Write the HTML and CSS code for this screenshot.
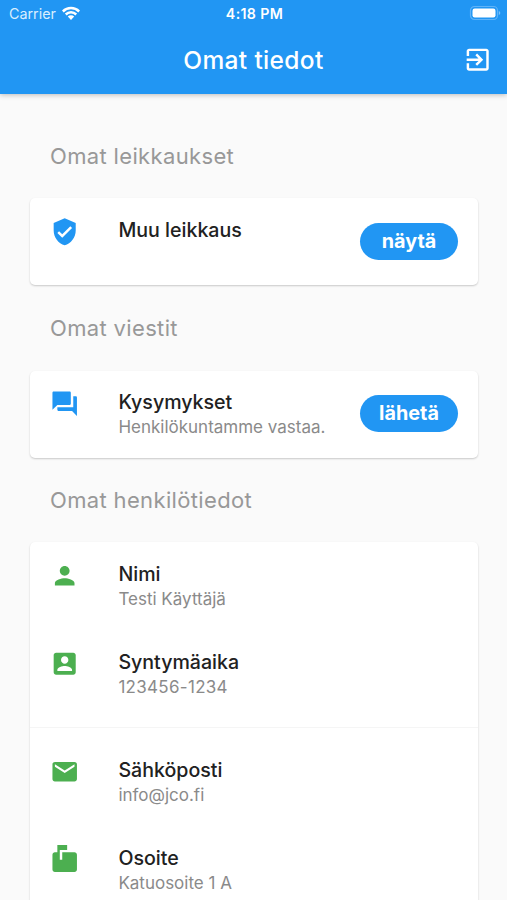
FILE: index.html
```html
<!DOCTYPE html>
<html lang="fi">
<head>
<meta charset="utf-8">
<title>Omat tiedot</title>
<link rel="stylesheet" href="styles.css">
</head>
<body>
<header class="appbar">
  <div class="status">
    <div class="carrier"><span>Carrier</span>
      <svg class="wifi" viewBox="0 0 18 14"><path d="M0 4.6a12.7 12.7 0 0 1 18 0l-1.7 1.8a10.3 10.3 0 0 0-14.6 0z"/><path d="M2.9 7.6a8.6 8.6 0 0 1 12.2 0l-1.7 1.8a6.2 6.2 0 0 0-8.8 0z"/><path d="M5.8 10.6a4.5 4.5 0 0 1 6.4 0L9 13.9z"/></svg>
    </div>
    <div class="clock">4:18 PM</div>
    <svg class="battery" viewBox="0 0 32 16"><rect x="1.5" y="1.5" width="27" height="13" rx="4" fill="none" stroke="#5fb3f8" stroke-width="1.2"/><rect x="3.5" y="3.5" width="23" height="9" rx="2.2" fill="#fff"/><path d="M29.8 6v4q1.5-.6 1.5-2t-1.5-2z" fill="#7cc1fa"/></svg>
  </div>
  <div class="toolbar">
    <h1>Omat tiedot</h1>
    <svg class="exit" viewBox="0 0 24 24"><path d="M10.09 15.59L11.5 17l5-5-5-5-1.41 1.41L12.67 11H3v2h9.67l-2.58 2.59zM19 3H5c-1.11 0-2 .9-2 2v4h2V5h14v14H5v-4H3v4c0 1.1.89 2 2 2h14c1.1 0 2-.9 2-2V5c0-1.1-.9-2-2-2z"/></svg>
  </div>
</header>
<main>
  <h2>Omat leikkaukset</h2>
  <section class="card surgeries">
    <div class="row">
      <svg class="icon blue" viewBox="0 0 24 24"><path d="M12 1L3 5v6c0 5.55 3.84 10.74 9 12 5.16-1.26 9-6.45 9-12V5l-9-4zm-2 16l-4-4 1.41-1.41L10 14.17l6.59-6.59L18 9l-8 8z"/></svg>
      <div class="text"><h3>Muu leikkaus</h3></div>
      <button>näytä</button>
    </div>
  </section>
  <h2>Omat viestit</h2>
  <section class="card messages">
    <div class="row">
      <svg class="icon blue" viewBox="0 0 24 24"><path d="M21 6h-2v9H6v2c0 .55.45 1 1 1h11l4 4V7c0-.55-.45-1-1-1zm-4 6V3c0-.55-.45-1-1-1H3c-.55 0-1 .45-1 1v14l4-4h10c.55 0 1-.45 1-1z"/></svg>
      <div class="text"><h3>Kysymykset</h3><p>Henkilökuntamme vastaa.</p></div>
      <button>lähetä</button>
    </div>
  </section>
  <h2>Omat henkilötiedot</h2>
  <section class="card">
    <div class="row">
      <svg class="icon" viewBox="0 0 24 24"><path d="M12 12c2.21 0 4-1.79 4-4s-1.79-4-4-4-4 1.79-4 4 1.79 4 4 4zm0 2c-2.67 0-8 1.34-8 4v2h16v-2c0-2.66-5.33-4-8-4z"/></svg>
      <div class="text"><h3>Nimi</h3><p>Testi Käyttäjä</p></div>
    </div>
    <div class="row">
      <svg class="icon" viewBox="0 0 24 24"><path d="M3 5v14c0 1.1.89 2 2 2h14c1.1 0 2-.9 2-2V5c0-1.1-.9-2-2-2H5c-1.11 0-2 .9-2 2zm12 4c0 1.66-1.34 3-3 3s-3-1.34-3-3 1.34-3 3-3 3 1.34 3 3zm-9 8c0-2 4-3.1 6-3.1s6 1.1 6 3.1v1H6v-1z"/></svg>
      <div class="text"><h3>Syntymäaika</h3><p class="digits">123456-1234</p></div>
    </div>
    <hr>
    <div class="row">
      <svg class="icon" viewBox="0 0 24 24"><path d="M20 4H4c-1.1 0-1.99.9-1.99 2L2 18c0 1.1.9 2 2 2h16c1.1 0 2-.9 2-2V6c0-1.1-.9-2-2-2zm0 4l-8 5-8-5V6l8 5 8-5v2z"/></svg>
      <div class="text"><h3>Sähköposti</h3><p>info@jco.fi</p></div>
    </div>
    <div class="row">
      <svg class="icon" viewBox="0 0 24 24"><path d="M20 6H10v6H8V4h6V0H6v6H4c-1.1 0-2 .9-2 2v12c0 1.1.9 2 2 2h16c1.1 0 2-.9 2-2V8c0-1.1-.9-2-2-2z"/></svg>
      <div class="text"><h3>Osoite</h3><p>Katuosoite 1 A</p></div>
    </div>
  </section>
</main>
</body>
</html>
```
FILE: styles.css
```css
* { box-sizing: border-box; }
body {
  margin: 0;
  height: 900px;
  overflow: hidden;
  background: #fafafa;
  font-family: Inter, "Liberation Sans", sans-serif;
}
h1, h2, h3, p { margin: 0; }
.appbar {
  position: relative;
  height: 94px;
  background: #2196f3;
  color: #fff;
  box-shadow: 0 1px 5px rgba(0, 0, 0, .25);
}
.status {
  display: grid;
  grid-template-columns: 1fr auto 1fr;
  align-items: center;
  height: 27px;
  padding: 0 6px 0 9px;
}
.carrier {
  display: flex;
  align-items: center;
  gap: 6px;
  font-size: 14.3px;
  line-height: 18px;
  color: #d9eefe;
}
.wifi { width: 18px; height: 14px; margin-top: -2px; fill: #fff; }
.clock { font-size: 14.2px; font-weight: 600; letter-spacing: .35px; margin-left: -1px; }
.battery { width: 32px; height: 16px; justify-self: end; margin-top: -1px; }
.toolbar {
  display: grid;
  grid-template-columns: 48px 1fr 48px;
  align-items: center;
  height: 65px;
}
.toolbar h1 {
  grid-column: 2;
  text-align: center;
  font-size: 24.5px;
  font-weight: 500;
  letter-spacing: .35px;
}
.exit { width: 29.4px; height: 29.4px; margin-left: 4px; fill: #fff; }
main { padding: 20px 29px 0 30px; }
h2 {
  height: 84px;
  padding-left: 20px;
  line-height: 84px;
  font-size: 22px;
  font-weight: 400;
  letter-spacing: .35px;
  color: #989898;
}
.card {
  background: #fff;
  border-radius: 5px;
  box-shadow: 0 1px 2px rgba(0, 0, 0, .2);
}
.row {
  display: flex;
  height: 88px;
  padding: 19px 20px 0 19.6px;
}
.surgeries { margin-bottom: 1px; }
.surgeries .row { height: 87px; }
.messages { margin-top: 1px; }
.messages .row { height: 87px; padding-top: 18px; }
.icon { flex: none; width: 29.4px; height: 29.4px; fill: #4caf50; }
.blue { fill: #2196f3; }
.text { flex: 1; padding-left: 39.4px; white-space: nowrap; }
h3 {
  font-size: 19.6px;
  line-height: 26px;
  font-weight: 500;
  letter-spacing: 0;
  color: #212121;
}
p {
  font-size: 17px;
  line-height: 25px;
  color: #8a8a8a;
}
.digits { letter-spacing: .3px; }
button {
  flex: none;
  width: 98px;
  height: 37px;
  margin-top: 6px;
  padding: 0;
  border: 0;
  border-radius: 19px;
  background: #2196f3;
  color: #fff;
  font: 700 19.8px/37px Inter, "Liberation Sans", sans-serif;
}
hr {
  height: 1px;
  margin: 9px 0 10px;
  border: 0;
  background: #f5f5f5;
}
```
